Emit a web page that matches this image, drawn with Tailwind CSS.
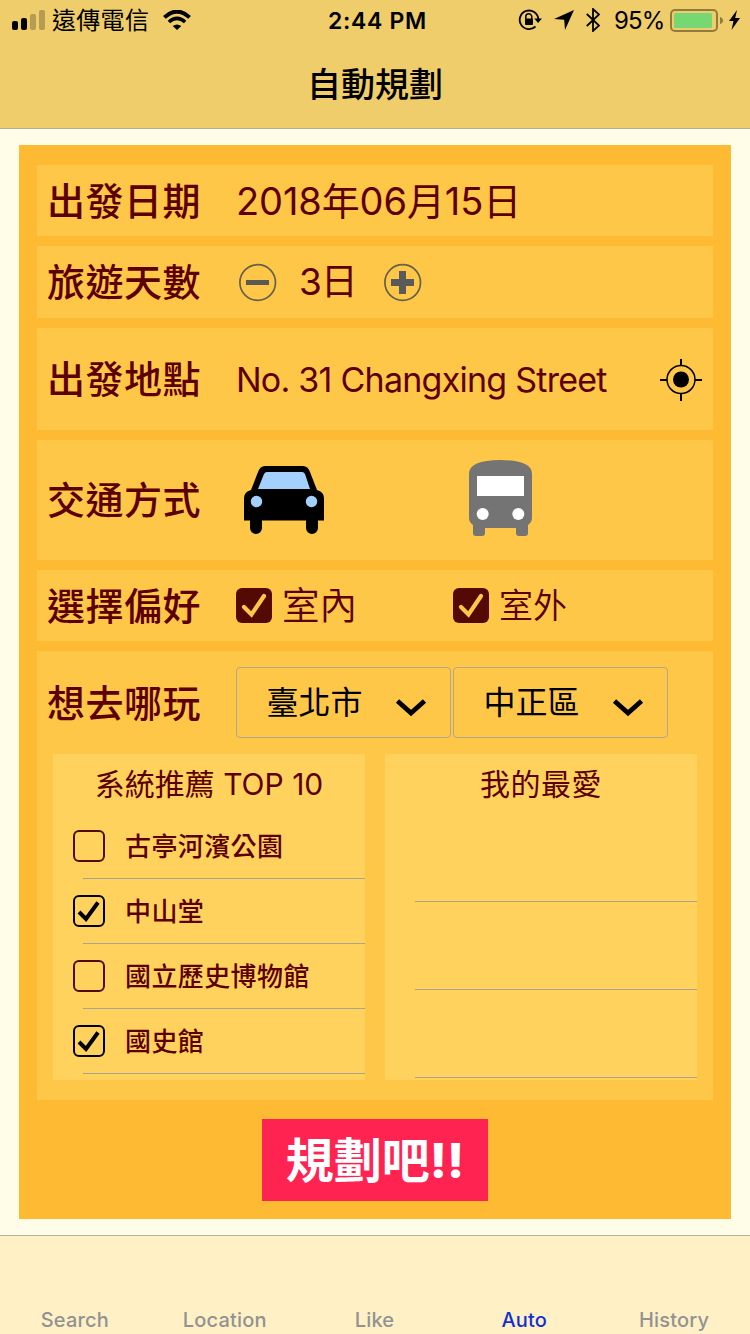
<!DOCTYPE html>
<html lang="zh-Hant">
<head>
<meta charset="utf-8">
<title>自動規劃</title>
<script src="https://cdn.jsdelivr.net/npm/@tailwindcss/browser@4"></script>
</head>
<body class="flex h-[1334px] w-[750px] flex-col overflow-hidden bg-[#fffde7] font-['Inter','Noto_Sans_CJK_TC',sans-serif] leading-none whitespace-nowrap text-[#5c0000]">
<header class="flex h-[129px] shrink-0 flex-col border-b border-[#b3ad99] bg-[#efcd6a] text-black">
  <div class="flex h-10 items-center">
    <div class="flex w-[280px] items-center pl-3">
      <svg class="block h-5 w-[33px]" viewBox="0 0 33 20"><rect y="11" width="6" height="9" rx="2"/><rect x="9" y="8" width="6" height="12" rx="2"/><g fill="#b59c51"><rect x="18" y="4" width="6" height="16" rx="2"/><rect x="27" width="6" height="20" rx="2"/></g></svg>
      <span class="ml-[7px] w-[99px] pt-[2px] text-[24px] tracking-[0.3px]">遠傳電信</span>
      <svg class="ml-3 block h-5 w-7" viewBox="0 0 28 20" fill="none" stroke="#000" stroke-width="4"><path d="M1.4 7.4Q14-4.2 26.6 7.4"/><path d="M5.9 12Q14 4.9 22.1 12" stroke-width="3.6"/><path d="M9.7 16.1Q14 12.8 18.3 16.1L14 20Z" fill="#000" stroke="none"/></svg>
    </div>
    <div class="w-[195px] pt-[2px] text-center text-[23px] font-semibold tracking-[0.7px]">2:44 PM</div>
    <div class="flex flex-1 items-center pl-[43px]">
      <svg class="block h-[22px] w-6" viewBox="0 0 24 22" fill="none" stroke="#000" stroke-width="1.8"><path d="M20.3 10A9.3 9.3 0 1 0 17.5 17.5"/><path d="M16.3 9.5H24L20.1 14Z" fill="#000" stroke="none"/><path d="M7.8 10V7.8a3 3 0 0 1 6 0V10" stroke-width="1.5"/><rect x="7" y="9.5" width="8" height="6.5" rx="1" fill="#000" stroke="none"/></svg>
      <svg class="ml-3 block h-5 w-5" viewBox="0 0 20 20"><path d="M20 0 11 20 10.2 9.8 0 9Z"/></svg>
      <svg class="ml-3 block h-6 w-[14px]" viewBox="0 0 14 24" fill="none" stroke="#000" stroke-width="1.8"><path d="M.8 6 13 17.5 7 23V1L13 6.500.8 18"/></svg>
      <span class="ml-[14px] w-[51px] pt-[2px] text-[24px] tracking-[-0.8px]">95%</span>
      <svg class="ml-[5px] block h-6 w-[54px]" viewBox="0 0 54 24"><rect x="1" y="2" width="46" height="21" rx="4" fill="none" stroke="#8f7b40" stroke-width="2"/><rect x="4" y="5" width="38" height="15" rx="1.500" fill="#77d772"/><path d="M50 9q3 1 3 3.500T50 16Z" fill="#8f7b40"/></svg>
      <svg class="ml-[5px] block h-5 w-[11px]" viewBox="0 0 11 20"><path d="M8 0 0 11H4.500L2.500 20 11 8H6.200Z"/></svg>
    </div>
  </div>
  <h1 class="pt-[28px] text-center text-[34px] font-medium leading-[33px]">自動規劃</h1>
</header>

<main class="mx-[19px] mt-4 flex h-[1074px] shrink-0 flex-col gap-[10px] bg-[#ffba33] px-[18px] pt-5">
  <section class="flex h-[71px] shrink-0 items-center bg-[#ffc748] pl-[10px]">
    <span class="w-[189px] text-[38px] font-medium tracking-[0.5px]">出發日期</span>
    <span class="text-[38px] tracking-[-0.100px]">2018年06月15日</span>
  </section>
  <section class="flex h-[72px] shrink-0 items-center bg-[#ffc748] pl-[10px]">
    <span class="w-[191px] text-[38px] font-medium tracking-[0.5px]">旅遊天數</span>
    <svg class="block size-[39px]" viewBox="0 0 39 39"><circle cx="19.700" cy="19.500" r="17.800" fill="none" stroke="#64614c" stroke-width="1.700"/><rect x="8" y="17" width="23" height="5" fill="#5a5a52"/></svg>
    <span class="ml-[22px] w-[85px] pb-px text-[37px] tracking-[-1px]">3日</span>
    <svg class="-ml-px block size-[39px]" viewBox="0 0 39 39"><circle cx="19.700" cy="19.500" r="17.800" fill="none" stroke="#64614c" stroke-width="1.700"/><path d="M16 8h7v8h8v7h-8v8h-7v-8H8v-7h8Z" fill="#5a5a5a"/></svg>
  </section>
  <section class="flex h-[102px] shrink-0 items-center bg-[#ffc748] pl-[10px]">
    <span class="w-[189px] text-[38px] font-medium tracking-[0.5px]">出發地點</span>
    <span class="w-[423px] pt-px text-[34px] tracking-[-0.750px]">No. 31 Changxing Street</span>
    <svg class="block size-[44px]" viewBox="0 0 44 44" fill="none" stroke="#000" stroke-width="2"><circle cx="22" cy="22.500" r="14" stroke-width="1.500"/><circle cx="22" cy="22.500" r="8" fill="#000" stroke="none"/><path d="M22 2v7M22 36v8M1 23h7M36 23h7"/></svg>
  </section>
  <section class="flex h-[120px] shrink-0 items-center bg-[#ffc748] pl-[10px]">
    <span class="w-[197px] text-[38px] font-medium tracking-[0.5px]">交通方式</span>
    <svg class="block h-[68px] w-[80px]" viewBox="0 0 80 68"><path d="M0 54.500V32q0-6 7-8L14 6q2-6 7-6h38q5 0 7 6l7 18q7 2 7 8v22.500h-6V62a6 6 0 0 1-12 0v-7.500H18V62a6 6 0 0 1-12 0v-7.500Z"/><path d="M14 23 20 8q1-2 3-2h35q2 0 3 2l5 15Z" fill="#a3d0fc"/><circle cx="12.500" cy="35.500" r="5.700" fill="#a3d0fc"/><circle cx="67.500" cy="35.500" r="5.700" fill="#a3d0fc"/></svg>
    <svg class="mb-1 ml-[145px] block h-[76px] w-[63px]" viewBox="0 0 63 76"><path d="M0 14Q0 0 31.500 0T63 14v44q0 4-4 7v8q0 3-3 3h-6q-3 0-3-3v-5H16v5q0 3-3 3H7q-3 0-3-3v-8q-4-3-4-7Z" fill="#747474"/><path d="M8 16h47v20H8Z" fill="#fff"/><circle cx="13.700" cy="54" r="6" fill="#fff"/><circle cx="49.300" cy="54" r="6" fill="#fff"/></svg>
  </section>
  <section class="flex h-[71px] shrink-0 items-center bg-[#ffc748] pl-[10px]">
    <span class="w-[189px] text-[38px] font-medium tracking-[0.5px]">選擇偏好</span>
    <svg class="block size-9" viewBox="0 0 36 36"><rect width="36" height="35" rx="6" fill="#540a04"/><path d="m8 19 7.500 7.500L28 8" fill="none" stroke="#ffc748" stroke-width="4.200" stroke-linecap="round"/></svg>
    <span class="w-[181px] pl-[10px] text-[37.500px] font-[350]">室內</span>
    <svg class="block size-9" viewBox="0 0 36 36"><rect width="36" height="35" rx="6" fill="#540a04"/><path d="m8 19 7.500 7.500L28 8" fill="none" stroke="#ffc748" stroke-width="4.200" stroke-linecap="round"/></svg>
    <span class="pl-[10px] text-[34px] font-[350]">室外</span>
  </section>
  <section class="flex h-[449px] shrink-0 flex-col bg-[#ffc748]">
    <div class="flex h-[103px] items-center pl-[10px]">
      <span class="w-[189px] text-[38px] font-medium tracking-[0.5px]">想去哪玩</span>
      <div class="-mt-px flex h-[71px] w-[215px] items-center rounded-[4px] border border-[#b3a68a] pl-[29.500px] text-[32px] text-black"><span class="w-[128px] pt-[2px]">臺北市</span><svg class="mt-[10px] block h-[19px] w-8" viewBox="0 0 32 19"><path d="m2.500 3 13.500 12L29.500 3" fill="none" stroke="#000" stroke-width="4.800"/></svg></div>
      <div class="-mt-px ml-[2px] flex h-[71px] w-[215px] items-center rounded-[4px] border border-[#b3a68a] pl-[29.500px] text-[32px] text-black"><span class="w-[128px] pt-[2px]">中正區</span><svg class="mt-[10px] block h-[19px] w-8" viewBox="0 0 32 19"><path d="m2.500 3 13.500 12L29.500 3" fill="none" stroke="#000" stroke-width="4.800"/></svg></div>
    </div>
    <div class="flex gap-5 px-4">
      <div class="h-[326px] w-[312px] bg-[#ffd25e]">
        <h2 class="flex h-[60px] items-center justify-center text-[30px] font-normal">系統推薦 TOP 10</h2>
        <ul>
          <li class="ml-[30px] flex h-[65px] items-center border-b border-[#a7a590]"><svg class="-ml-[10px] block size-8" viewBox="0 0 32 32"><rect x="1" y="1" width="30" height="30" rx="5" fill="none" stroke="#540a04" stroke-width="2"/></svg><span class="pt-[2px] pl-5 text-[26px] font-medium tracking-[0.400px]">古亭河濱公園</span></li>
          <li class="ml-[30px] flex h-[65px] items-center border-b border-[#a7a590]"><svg class="-ml-[10px] block size-8" viewBox="0 0 32 32" fill="none" stroke="#000"><rect x="1" y="1" width="30" height="30" rx="5" stroke-width="2"/><path d="m6 17 7 7L25 7.500" stroke-width="4"/></svg><span class="pt-[2px] pl-5 text-[26px] font-medium tracking-[0.400px]">中山堂</span></li>
          <li class="ml-[30px] flex h-[65px] items-center border-b border-[#a7a590]"><svg class="-ml-[10px] block size-8" viewBox="0 0 32 32"><rect x="1" y="1" width="30" height="30" rx="5" fill="none" stroke="#540a04" stroke-width="2"/></svg><span class="pt-[2px] pl-5 text-[26px] font-medium tracking-[0.400px]">國立歷史博物館</span></li>
          <li class="ml-[30px] flex h-[65px] items-center border-b border-[#a7a590]"><svg class="-ml-[10px] block size-8" viewBox="0 0 32 32" fill="none" stroke="#000"><rect x="1" y="1" width="30" height="30" rx="5" stroke-width="2"/><path d="m6 17 7 7L25 7.500" stroke-width="4"/></svg><span class="pt-[2px] pl-5 text-[26px] font-medium tracking-[0.400px]">國史館</span></li>
        </ul>
      </div>
      <div class="h-[326px] w-[312px] bg-[#ffd25e]">
        <h2 class="flex h-[60px] items-center justify-center text-[30px] font-normal tracking-[0.500px]">我的最愛</h2>
        <ul class="pl-[30px]">
          <li class="h-[88px] border-b border-[#a7a590]"></li>
          <li class="h-[88px] border-b border-[#a7a590]"></li>
          <li class="h-[88px] border-b border-[#a7a590]"></li>
        </ul>
      </div>
    </div>
  </section>
  <button class="mt-[9px] flex h-[82px] w-[226px] shrink-0 items-center justify-center self-center bg-[#ff2352] pt-[2px] text-[48px] font-bold text-white">規劃吧<span class="font-extrabold">!!</span></button>
</main>

<nav class="mt-4 grid h-[99px] shrink-0 grid-cols-5 border-t border-[#b3b39f] bg-[#fff1c5] pt-[73px] pr-px text-center text-[20px] font-medium leading-[22px] tracking-[0.200px] text-[#929292]">
  <span>Search</span><span>Location</span><span>Like</span><span class="text-[#1232d0]">Auto</span><span>History</span>
</nav>
</body>
</html>
